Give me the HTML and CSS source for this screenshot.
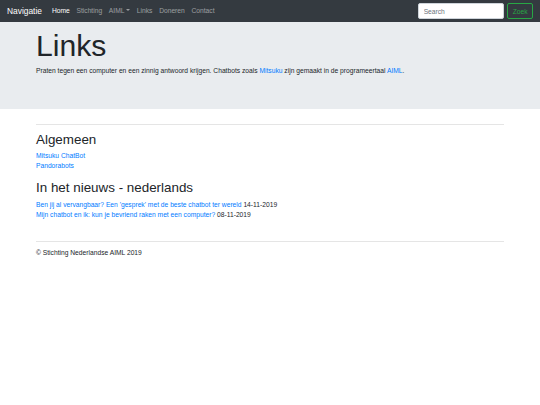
FILE: index.html
```html
<!DOCTYPE html>
<html lang="nl">
<head>
<meta charset="utf-8">
<title>Links</title>
<link rel="stylesheet" href="styles.css">
</head>
<body>
<nav class="navbar">
  <a class="brand" href="#">Navigatie</a>
  <ul class="nav">
    <li><a class="nav-link active" href="#">Home</a></li>
    <li><a class="nav-link" href="#">Stichting</a></li>
    <li><a class="nav-link" href="#">AIML<span class="caret"></span></a></li>
    <li><a class="nav-link" href="#">Links</a></li>
    <li><a class="nav-link" href="#">Doneren</a></li>
    <li><a class="nav-link" href="#">Contact</a></li>
  </ul>
  <form class="search">
    <input class="search-input" type="text" placeholder="Search">
    <button class="btn-zoek" type="button">Zoek</button>
  </form>
</nav>
<main>
  <div class="jumbotron">
    <div class="container">
      <h1 class="display">Links</h1>
      <p class="lead-text">Praten tegen een computer en een zinnig antwoord krijgen. Chatbots zoals <a href="#">Mitsuku</a> zijn gemaakt in de programeertaal <a href="#">AIML</a>.</p>
    </div>
  </div>
  <div class="container content">
    <hr class="rule">
    <h2 class="section-title">Algemeen</h2>
    <ul class="link-list first">
      <li><a href="#">Mitsuku ChatBot</a></li>
      <li><a href="#">Pandorabots</a></li>
    </ul>
    <h2 class="section-title news">In het nieuws - nederlands</h2>
    <ul class="link-list">
      <li><a href="#">Ben jij al vervangbaar? Een 'gesprek' met de beste chatbot ter wereld</a> 14-11-2019</li>
      <li><a href="#">Mijn chatbot en ik: kun je bevriend raken met een computer?</a> 08-11-2019</li>
    </ul>
  </div>
</main>
<footer class="container footer">
  <hr class="rule bottom">
  <p class="copy">&copy; Stichting Nederlandse AIML 2019</p>
</footer>
</body>
</html>
```
FILE: styles.css
```css
* { box-sizing: border-box; }
html, body {
  margin: 0;
  padding: 0;
  background: #fff;
}
body {
  font-family: "Liberation Sans", Arial, Helvetica, sans-serif;
  font-size: 6.7px;
  line-height: 10px;
  color: #212529;
}
a { color: #007bff; text-decoration: none; }

.navbar {
  height: 22px;
  background: #343a40;
  display: flex;
  align-items: center;
  padding: 0 7px;
}
.brand {
  color: #fff;
  font-size: 8.4px;
  margin-right: 6.7px;
  line-height: 12px;
}
.nav {
  list-style: none;
  margin: 0;
  padding: 0;
  display: flex;
  flex: 1;
}
.nav-link {
  display: block;
  padding: 0 3.35px;
  color: rgba(255,255,255,.5);
}
.nav-link.active { color: #fff; }
.caret {
  display: inline-block;
  margin-left: 1.7px;
  vertical-align: 1.7px;
  border-top: 2px solid;
  border-left: 2px solid transparent;
  border-right: 2px solid transparent;
}
.search {
  display: flex;
  align-items: center;
  margin: 0;
}
.search-input {
  width: 86px;
  height: 16px;
  margin: 0 3.5px 0 0;
  padding: 0 5px;
  font: 6.7px "Liberation Sans", Arial, sans-serif;
  color: #495057;
  background: #fff;
  border: 1px solid #ced4da;
  border-radius: 2px;
  outline: none;
}
.search-input::placeholder { color: #6c757d; }
.btn-zoek {
  height: 16px;
  padding: 0 4.5px;
  font: 6.7px "Liberation Sans", Arial, sans-serif;
  color: #28a745;
  background: transparent;
  border: 1px solid #28a745;
  border-radius: 2px;
}

.container {
  max-width: 480px;
  margin: 0 auto;
  padding: 0 6px;
}

.jumbotron {
  background: #e9ecef;
  padding: 7px 0 33.3px;
}
.display {
  margin: 0 0 3.5px;
  font-size: 30.15px;
  font-weight: 300;
  line-height: 1.1;
}
.lead-text {
  margin: 0;
  line-height: 10px;
}

.content { padding-top: 15px; }
.rule {
  margin: 0 0 7px;
  border: 0;
  border-top: 1px solid rgba(0,0,0,.1);
}
.section-title {
  margin: 0 0 2.5px;
  font-size: 13.4px;
  font-weight: 500;
  line-height: 1.2;
}
.section-title.news { margin-bottom: 3.5px; }
.link-list {
  list-style: none;
  margin: 0;
  padding: 0;
}
.link-list.first { margin-bottom: 9.5px; }

.footer { padding-top: 21.3px; }
.rule.bottom { margin: 0 0 6px; }
.copy { margin: 0; }
```
